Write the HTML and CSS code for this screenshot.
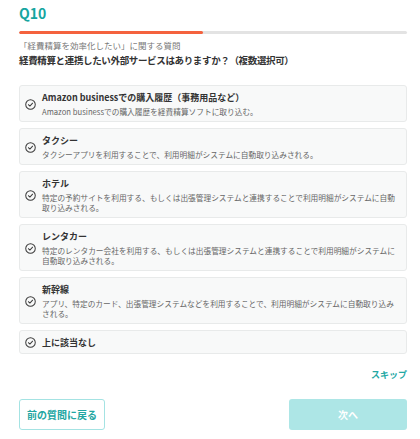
FILE: index.html
```html
<!DOCTYPE html>
<html lang="ja">
<head>
    <meta charset="UTF-8">
    <meta name="viewport" content="width=device-width, initial-scale=1.0">
    <title>Q10</title>
    <link rel="stylesheet" href="styles.css">
</head>
<body>
    <div class="container">
        <h2 class="q-number">Q10</h2>
        <div class="progress"><div class="progress-fill" style="width: 47.3%"></div></div>
        <p class="category">「経費精算を効率化したい」に関する質問</p>
        <p class="question">経費精算と連携したい外部サービスはありますか？（複数選択可）</p>

        <ul class="options">
            <li class="option">
                <span class="check"><svg viewBox="0 0 12 12"><circle cx="6" cy="6" r="5.2"/><path d="M3.7 6.2 L5.3 7.7 L8.3 4.6"/></svg></span>
                <div class="option-text">
                    <div class="option-title">Amazon businessでの購入履歴（事務用品など）</div>
                    <div class="option-desc">Amazon businessでの購入履歴を経費精算ソフトに取り込む。</div>
                </div>
            </li>
            <li class="option">
                <span class="check"><svg viewBox="0 0 12 12"><circle cx="6" cy="6" r="5.2"/><path d="M3.7 6.2 L5.3 7.7 L8.3 4.6"/></svg></span>
                <div class="option-text">
                    <div class="option-title">タクシー</div>
                    <div class="option-desc">タクシーアプリを利用することで、利用明細がシステムに自動取り込みされる。</div>
                </div>
            </li>
            <li class="option">
                <span class="check"><svg viewBox="0 0 12 12"><circle cx="6" cy="6" r="5.2"/><path d="M3.7 6.2 L5.3 7.7 L8.3 4.6"/></svg></span>
                <div class="option-text">
                    <div class="option-title">ホテル</div>
                    <div class="option-desc">特定の予約サイトを利用する、もしくは出張管理システムと連携することで利用明細がシステムに自動取り込みされる。</div>
                </div>
            </li>
            <li class="option">
                <span class="check"><svg viewBox="0 0 12 12"><circle cx="6" cy="6" r="5.2"/><path d="M3.7 6.2 L5.3 7.7 L8.3 4.6"/></svg></span>
                <div class="option-text">
                    <div class="option-title">レンタカー</div>
                    <div class="option-desc">特定のレンタカー会社を利用する、もしくは出張管理システムと連携することで利用明細がシステムに自動取り込みされる。</div>
                </div>
            </li>
            <li class="option">
                <span class="check"><svg viewBox="0 0 12 12"><circle cx="6" cy="6" r="5.2"/><path d="M3.7 6.2 L5.3 7.7 L8.3 4.6"/></svg></span>
                <div class="option-text">
                    <div class="option-title">新幹線</div>
                    <div class="option-desc">アプリ、特定のカード、出張管理システムなどを利用することで、利用明細がシステムに自動取り込みされる。</div>
                </div>
            </li>
            <li class="option">
                <span class="check"><svg viewBox="0 0 12 12"><circle cx="6" cy="6" r="5.2"/><path d="M3.7 6.2 L5.3 7.7 L8.3 4.6"/></svg></span>
                <div class="option-text">
                    <div class="option-title">上に該当なし</div>
                </div>
            </li>
        </ul>

        <div class="skip-row"><a class="skip" href="#">スキップ</a></div>

        <div class="actions">
            <button class="btn-back">前の質問に戻る</button>
            <button class="btn-next">次へ</button>
        </div>
    </div>
</body>
</html>
```

FILE: styles.css
```css
body {
    font-family: "Noto Sans CJK JP", "Noto Sans", sans-serif;
    background-color: #fff;
    color: #333;
    margin: 0;
}
.container {
    padding: 4px 13px 0 19px;
}
.q-number {
    margin: 0;
    font-size: 14px;
    line-height: 18px;
    font-weight: bold;
    color: #16a5a0;
}
.progress {
    margin-top: 9px;
    height: 3px;
    background: #e3e3e3;
    border-radius: 2px;
    overflow: hidden;
}
.progress-fill {
    height: 100%;
    background: #f4623e;
    border-radius: 2px;
}
.category {
    margin: 5px 0 0;
    font-size: 8.5px;
    line-height: 12px;
    color: #777;
}
.question {
    margin: 2px 0 0;
    font-size: 9.5px;
    line-height: 14px;
    letter-spacing: -0.35px;
    font-weight: bold;
    color: #333;
}
.options {
    list-style: none;
    margin: 18px 0 0;
    padding: 0;
    display: flex;
    flex-direction: column;
    gap: 6px;
}
.option {
    display: flex;
    align-items: center;
    background: #f8f9f9;
    border: 1px solid #e8eaea;
    border-radius: 3px;
    padding: 5px 8px 4px 5px;
}
.check {
    flex: none;
    width: 11px;
    height: 11px;
    margin-right: 6px;
    display: flex;
}
.check svg {
    width: 11px;
    height: 11px;
    fill: none;
    stroke: #3a3a3a;
    stroke-width: 1.1;
    stroke-linecap: round;
    stroke-linejoin: round;
}
.option-text {
    flex: 1;
    min-width: 0;
}
.option-title {
    font-size: 9px;
    line-height: 13px;
    font-weight: bold;
    color: #333;
}
.option-desc {
    margin-top: 3px;
    font-size: 7.7px;
    line-height: 10px;
    color: #666;
}
.skip-row {
    display: flex;
    justify-content: flex-end;
    margin-top: 15px;
}
.skip {
    font-size: 9px;
    line-height: 12px;
    font-weight: bold;
    color: #23a8a4;
    text-decoration: none;
}
.actions {
    display: flex;
    justify-content: space-between;
    margin-top: 18px;
}
button {
    font-family: inherit;
    font-size: 10px;
    font-weight: bold;
    height: 31px;
    border-radius: 3px;
    cursor: pointer;
}
.btn-back {
    width: 86px;
    background: #fff;
    color: #22a6a2;
    border: 1px solid #a4e3e3;
}
.btn-next {
    width: 118px;
    background: #ade6e6;
    color: #fff;
    border: none;
}
```
